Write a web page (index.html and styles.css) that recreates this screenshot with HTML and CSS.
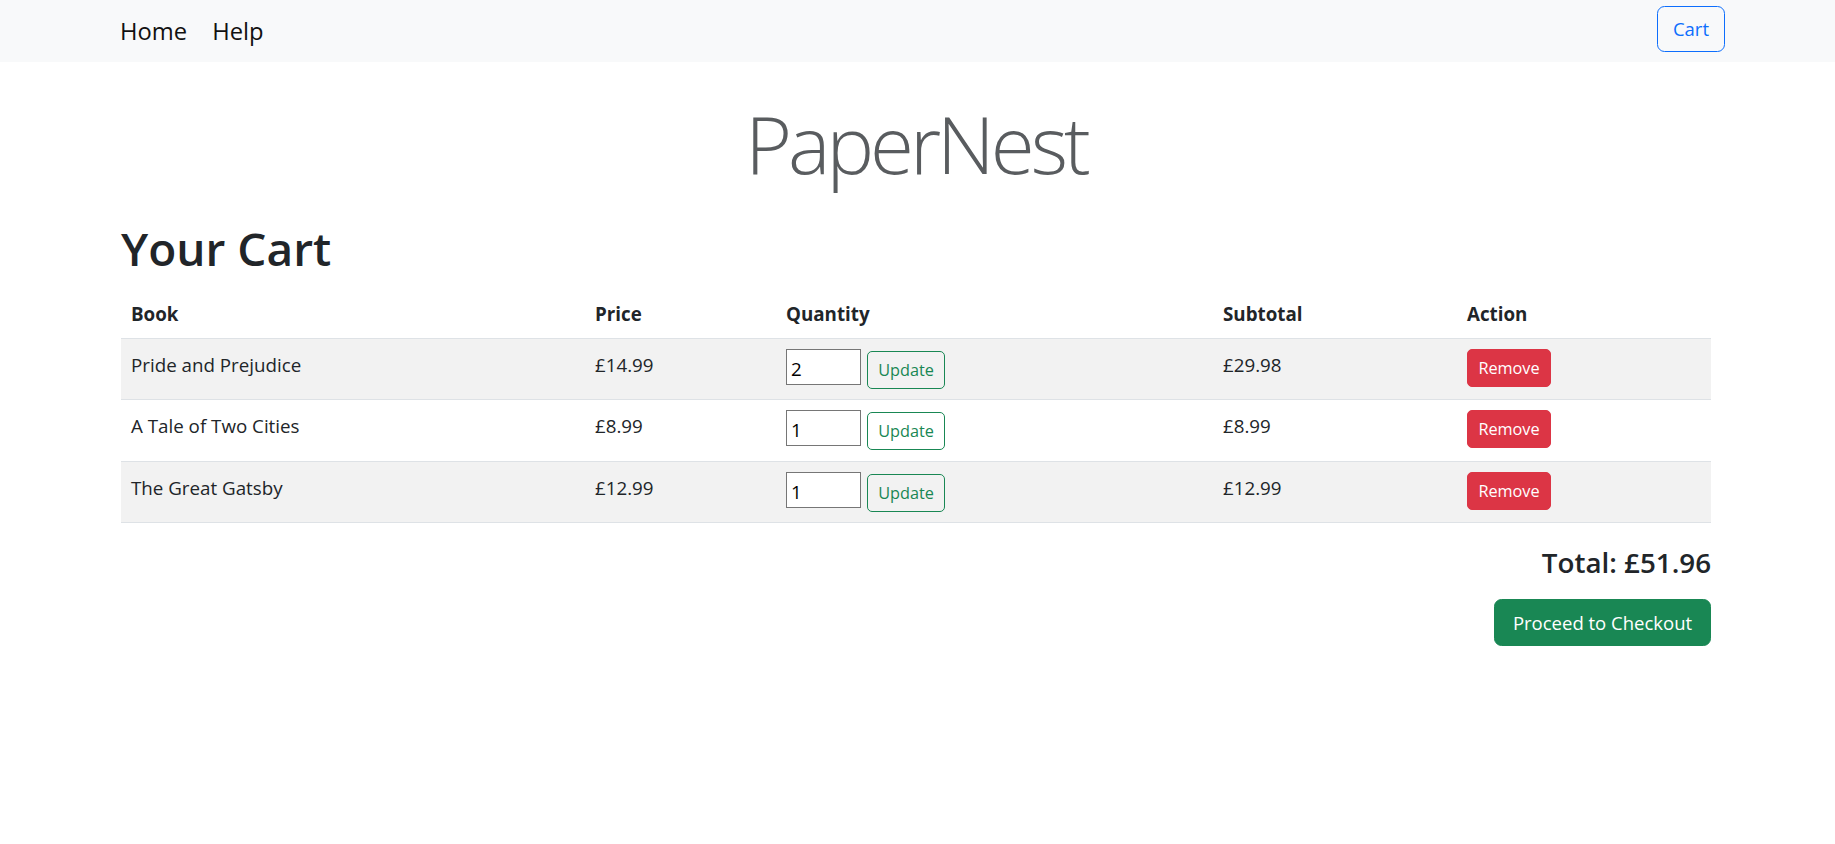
FILE: index.html
```html
<!DOCTYPE html>
<html lang="en">
<head>
<meta charset="utf-8">
<title>PaperNest - Cart</title>
<link rel="stylesheet" href="styles.css">
</head>
<body>
<nav class="navbar">
  <div class="nav-links">
    <a class="nav-link" href="#">Home</a>
    <a class="nav-link" href="#">Help</a>
  </div>
  <a class="btn-cart" href="#">Cart</a>
</nav>
<main class="container">
  <div class="brand">PaperNest</div>
  <h1 class="title">Your Cart</h1>
  <table class="cart-table">
    <thead>
      <tr>
        <th class="col-book">Book</th>
        <th class="col-price">Price</th>
        <th class="col-qty">Quantity</th>
        <th class="col-sub">Subtotal</th>
        <th class="col-act">Action</th>
      </tr>
    </thead>
    <tbody>
      <tr class="striped">
        <td>Pride and Prejudice</td>
        <td>£14.99</td>
        <td><div class="qty"><input class="qty-input" type="number" value="2"><button class="btn-update">Update</button></div></td>
        <td>£29.98</td>
        <td><button class="btn-remove">Remove</button></td>
      </tr>
      <tr class="tall">
        <td>A Tale of Two Cities</td>
        <td>£8.99</td>
        <td><div class="qty"><input class="qty-input" type="number" value="1"><button class="btn-update">Update</button></div></td>
        <td>£8.99</td>
        <td><button class="btn-remove">Remove</button></td>
      </tr>
      <tr class="striped">
        <td>The Great Gatsby</td>
        <td>£12.99</td>
        <td><div class="qty"><input class="qty-input" type="number" value="1"><button class="btn-update">Update</button></div></td>
        <td>£12.99</td>
        <td><button class="btn-remove">Remove</button></td>
      </tr>
    </tbody>
  </table>
  <div class="summary">
    <h4 class="total">Total: £51.96</h4>
    <button class="btn-checkout">Proceed to Checkout</button>
  </div>
</main>
</body>
</html>
```
FILE: styles.css
```css
* { box-sizing: border-box; }
html, body { margin: 0; padding: 0; }
body {
  font-family: "Open Sans", "Noto Sans", sans-serif;
  font-size: 18.75px;
  color: #212529;
  background: #fff;
}
.navbar {
  height: 62px;
  background: #f8f9fa;
  display: flex;
  align-items: center;
  justify-content: space-between;
  padding: 0 110px 1px 110px;
}
.nav-links { display: flex; gap: 5px; }
.nav-link {
  font-size: 23.75px;
  line-height: 34px;
  color: #111;
  text-decoration: none;
  padding: 0 10px;
}
.btn-cart {
  display: inline-block;
  height: 46px;
  margin-bottom: 3px;
  padding: 0 15px;
  line-height: 44px;
  border: 1px solid #0d6efd;
  border-radius: 7.5px;
  color: #0d6efd;
  font-size: 18.5px;
  text-decoration: none;
}
.container {
  width: 1590px;
  margin: 0 0 0 121px;
}
.brand {
  text-align: center;
  font-size: 80px;
  font-weight: 300;
  line-height: 96px;
  letter-spacing: -4px;
  color: #595c5f;
  margin-top: 33px;
}
.title {
  margin: 27px 0 10px;
  font-size: 46px;
  font-weight: 600;
  line-height: 60px;
  color: #212529;
}
.cart-table {
  width: 100%;
  border-collapse: collapse;
}
.cart-table th {
  text-align: left;
  font-weight: 700;
  padding: 11px 10px 9px;
  line-height: 30px;
  border-bottom: 1px solid #dee2e6;
}
.cart-table td {
  padding: 11px 10px 9px;
  line-height: 30px;
  vertical-align: top;
  border-bottom: 1px solid #dee2e6;
  height: 61px;
}
.cart-table tr.tall td { height: 62px; }
.cart-table tr.striped td { background: #f2f2f2; }
.col-book { width: 464px; }
.col-price { width: 191px; }
.col-qty { width: 437px; }
.col-sub { width: 244px; }
.col-act { width: 254px; }
.qty { display: flex; align-items: flex-start; gap: 6px; margin-top: -1px; height: 40px; }
.qty-input {
  width: 75px;
  height: 36px;
  border: 1px solid #767676;
  font-family: "Open Sans", sans-serif;
  font-size: 18.75px;
  padding: 2px 4px 0;
  background: #fff;
  color: #000;
  -moz-appearance: textfield;
}
.qty-input::-webkit-inner-spin-button,
.qty-input::-webkit-outer-spin-button { -webkit-appearance: none; margin: 0; }
.btn-update {
  margin-top: 2px;
  height: 38px;
  width: 78px;
  padding: 0;
  border: 1px solid #198754;
  border-radius: 5px;
  background: transparent;
  color: #198754;
  font-family: "Open Sans", sans-serif;
  font-size: 16.25px;
}
.btn-remove {
  margin-top: -1px;
  height: 38px;
  width: 84px;
  padding: 0;
  border: 1px solid #dc3545;
  border-radius: 5px;
  background: #dc3545;
  color: #fff;
  font-family: "Open Sans", sans-serif;
  font-size: 16.25px;
}
.summary {
  display: flex;
  flex-direction: column;
  align-items: flex-end;
}
.total {
  margin: 21px 0 0;
  font-size: 27.75px;
  font-weight: 600;
  line-height: 36px;
}
.btn-checkout {
  margin-top: 19px;
  height: 47px;
  width: 217px;
  border: 1px solid #198754;
  border-radius: 7.5px;
  background: #198754;
  color: #fff;
  font-family: "Open Sans", sans-serif;
  font-size: 18.5px;
}
```
